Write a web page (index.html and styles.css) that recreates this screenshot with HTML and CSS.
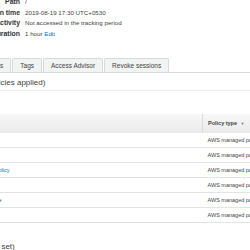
FILE: index.html
```html
<!DOCTYPE html>
<html lang="en">
<head>
    <meta charset="UTF-8">
    <meta name="viewport" content="width=device-width, initial-scale=1.0">
    <title>Role summary</title>
    <link rel="stylesheet" href="styles.css">
</head>
<body>
    <div class="page">
        <dl class="summary">
            <div class="row"><dt>Path</dt><dd>/</dd></div>
            <div class="row"><dt>Creation time</dt><dd>2019-08-19 17:30 UTC+0530</dd></div>
            <div class="row"><dt>Last activity</dt><dd>Not accessed in the tracking period</dd></div>
            <div class="row"><dt>Maximum CLI/API session duration</dt><dd>1 hour <a href="#">Edit</a></dd></div>
        </dl>

        <ul class="tabs">
            <li class="active">Permissions</li>
            <li>Trust relationships</li>
            <li>Tags</li>
            <li>Access Advisor</li>
            <li>Revoke sessions</li>
        </ul>

        <h3 class="section-title">Permissions policies (6 policies applied)</h3>

        <table class="policies">
            <thead>
                <tr>
                    <th class="name-col">Policy name <span class="caret">&#9660;</span></th>
                    <th>Policy type <span class="caret">&#9660;</span></th>
                </tr>
            </thead>
            <tbody>
                <tr><td>AmazonEC2FullAccess</td><td>AWS managed policy</td></tr>
                <tr><td>AmazonS3FullAccess</td><td>AWS managed policy</td></tr>
                <tr><td><a href="#">AmazonSSMManagedInstanceCorePolicy</a></td><td>AWS managed policy</td></tr>
                <tr><td>CloudWatchAgentServerPolicy</td><td>AWS managed policy</td></tr>
                <tr><td>AmazonElasticMapReduceforEC2Role</td><td>AWS managed policy</td></tr>
                <tr><td>AWSLambdaBasicExecution</td><td>AWS managed policy</td></tr>
            </tbody>
        </table>

        <h3 class="section-title boundary">Permissions boundary (not set)</h3>
    </div>
</body>
</html>
```

FILE: styles.css
```css
html {
    overflow: hidden;
}
body {
    margin: 0;
    font-family: "Liberation Sans", Arial, sans-serif;
    background-color: #fff;
    color: #444;
}
a {
    color: #0073bb;
    text-decoration: none;
}
.page {
    margin: -3px 0 0 -110px;
    width: 420px;
}

/* summary */
.summary {
    margin: 0;
    font-size: 6.2px;
    line-height: 10.7px;
}
.row {
    display: flex;
}
.row dt {
    width: 130px;
    text-align: right;
    font-size: 6.9px;
    font-weight: bold;
    color: #333;
}
.row dd {
    margin: 0 0 0 5px;
}

/* tabs */
.tabs {
    display: flex;
    gap: 1px;
    margin: 18px 0 0;
    padding: 0;
    list-style: none;
    border-bottom: 1px solid #d5dbdb;
    font-size: 6.5px;
}
.tabs li {
    height: 13px;
    line-height: 13px;
    padding: 0 7px;
    border: 1px solid #d5dbdb;
    border-bottom: none;
    border-radius: 2px 2px 0 0;
    background-color: #f2f3f3;
    color: #444;
}
.tabs li.active {
    background-color: #fff;
}

/* section headings */
.section-title {
    margin: 0;
    padding: 5px 0 2px 14px;
    font-size: 8px;
    line-height: 10px;
    font-weight: normal;
    color: #444;
    border-bottom: 1px solid #eaeded;
}
.boundary {
    margin-top: 14px;
}

/* policies table */
.policies {
    width: 100%;
    margin-top: 23px;
    border-collapse: collapse;
    font-size: 5.5px;
}
.policies th {
    height: 19px;
    padding: 0 5px;
    text-align: left;
    font-weight: bold;
    color: #444;
    background: linear-gradient(#f7f7f7, #eaeaea);
    border-left: 1px solid #dcdcdc;
}
.policies th.name-col {
    width: 290px;
    padding-left: 17px;
    border-left: none;
}
.caret {
    font-size: 4px;
    color: #777;
    margin-left: 2px;
}
.policies td {
    height: 14px;
    padding: 0 4px 0 5px;
    border-bottom: 1px solid #e1e4e4;
    color: #444;
}
.policies td:first-child {
    padding-left: 17px;
}
```
